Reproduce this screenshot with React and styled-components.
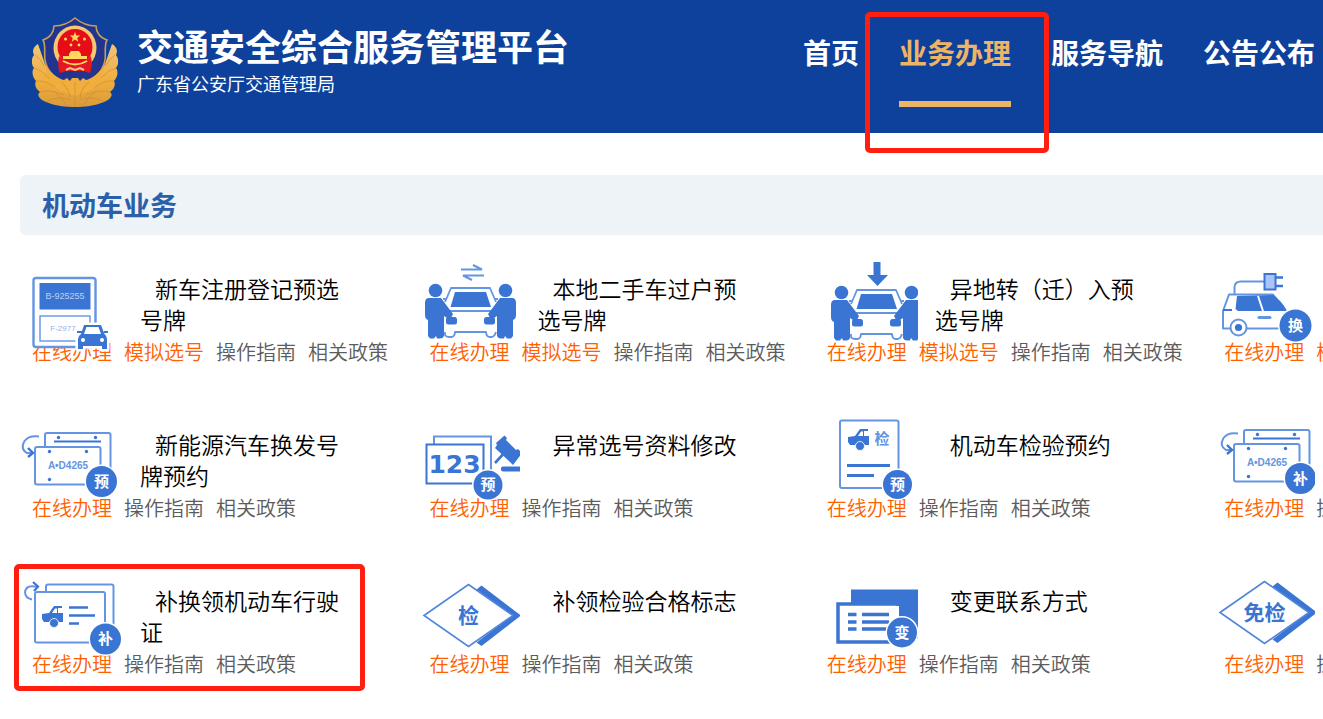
import React from 'react';
import styled, { createGlobalStyle } from 'styled-components';

const BLUE = '#3b75d4';
const LIGHT = '#6495e2';

const navItems = ['首页', '业务办理', '服务导航', '公告公布'];

const services = [
	{ icon: PlateCarIcon, title: '新车注册登记预选号牌', links: ['在线办理', '模拟选号', '操作指南', '相关政策'] },
	{ icon: TransferIcon, title: '本地二手车过户预选号牌', links: ['在线办理', '模拟选号', '操作指南', '相关政策'] },
	{ icon: MoveInIcon, title: '异地转（迁）入预选号牌', links: ['在线办理', '模拟选号', '操作指南', '相关政策'] },
	{ icon: ElectricCarIcon, links: ['在线办理', '模拟选号'] },
	{ icon: PlateBookIcon, title: '新能源汽车换发号牌预约', links: ['在线办理', '操作指南', '相关政策'] },
	{ icon: NumberEditIcon, title: '异常选号资料修改', links: ['在线办理', '操作指南', '相关政策'] },
	{ icon: InspectionIcon, title: '机动车检验预约', links: ['在线办理', '操作指南', '相关政策'] },
	{ icon: PlateReissueIcon, links: ['在线办理', '操作指南'] },
	{ icon: LicenseIcon, title: '补换领机动车行驶证', links: ['在线办理', '操作指南', '相关政策'], marked: true },
	{ icon: MarkIcon, title: '补领检验合格标志', links: ['在线办理', '操作指南', '相关政策'] },
	{ icon: ContactIcon, title: '变更联系方式', links: ['在线办理', '操作指南', '相关政策'] },
	{ icon: ExemptIcon, links: ['在线办理', '操作指南'] },
];

function App() {
	return (
		<Page>
			<GlobalStyle />
			<Header>
				<Emblem />
				<Brand>
					<BrandTitle>交通安全综合服务管理平台</BrandTitle>
					<BrandUnit>广东省公安厅交通管理局</BrandUnit>
				</Brand>
				<Nav>
					{navItems.map((item) => (
						<NavItem key={item}>
							<NavLink href="#" $active={item === '业务办理'}>
								{item}
							</NavLink>
							{item === '业务办理' && <NavMarker />}
						</NavItem>
					))}
				</Nav>
			</Header>
			<Main>
				<SectionTitle>机动车业务</SectionTitle>
				<ServiceGrid>
					{services.map((service, i) => (
						<ServiceCard key={i} {...service} />
					))}
				</ServiceGrid>
			</Main>
		</Page>
	);
}

export default App;

function ServiceCard({ icon: Icon, title, links, marked }) {
	return (
		<Card>
			<CardTop>
				<IconBox viewBox="0 0 103 92" aria-hidden="true">
					<Icon />
				</IconBox>
				{title && <CardTitle>{title}</CardTitle>}
			</CardTop>
			<Links>
				{links.map((link) => (
					<ServiceLink key={link} href="#" $hot={link === '在线办理' || link === '模拟选号'}>
						{link}
					</ServiceLink>
				))}
			</Links>
			{marked && <CardMarker />}
		</Card>
	);
}

function Emblem() {
	return (
		<EmblemSvg viewBox="0 0 86 92" aria-hidden="true">
			<defs>
				<linearGradient id="gold" x1="0" y1="0" x2="0" y2="1">
					<stop offset="0" stopColor="#f0c47a" />
					<stop offset="0.6" stopColor="#f0ae3c" />
					<stop offset="1" stopColor="#d99a3a" />
				</linearGradient>
			</defs>
			<path
				d="M6 28 C1 31 0 35 2 39 C-1 43 -1 48 2 52 C-1 56 1 62 4 65 C2 69 4 73 8 76 C4 79 8 84 14 86 C23 90 34 91 43 91 C52 91 63 90 72 86 C78 84 82 79 78 76 C82 73 84 69 82 65 C85 62 87 56 84 52 C87 48 87 43 84 39 C86 35 85 31 80 28 L73 48 L60 68 L26 68 L13 48 Z"
				fill="url(#gold)"
			/>
			<path
				d="M43 2 C36 8 28 10 22 10 C22 16 18 22 11 24 C14 29 12 37 13 44 C15 57 28 68 43 73 C58 68 71 57 73 44 C74 37 72 29 75 24 C68 22 64 16 64 10 C58 10 50 8 43 2 Z"
				fill="#23348c"
				stroke="#c99c58"
				strokeWidth="1.6"
			/>
			<path
				d="M14 50 C20 58 27 63 32 64 L35 62 L38 65 L40 62 H46 L48 65 L51 62 L54 64 C59 63 66 58 72 50 C72 60 67 68 59 74 L43 80 L27 74 C19 68 14 60 14 50 Z"
				fill="#f0ae3c"
			/>
			<g fill="none" stroke="#c98a30" strokeWidth="1" opacity="0.6">
				<path d="M3 39 Q9 43 12 50 M2 52 Q10 54 17 62 M4 65 Q13 64 23 71 M8 76 Q18 73 32 79 M14 86 Q25 79 39 84" />
				<path d="M83 39 Q77 43 74 50 M84 52 Q76 54 69 62 M82 65 Q73 64 63 71 M78 76 Q68 73 54 79 M72 86 Q61 79 47 84" />
				<path d="M29 66 Q37 72 38 82 M57 66 Q49 72 48 82 M43 66 V91 M22 75 Q31 83 35 89 M64 75 Q55 83 51 89" />
			</g>
			<ellipse cx="43" cy="32" rx="21.5" ry="22.5" fill="#f3ca73" />
			<ellipse cx="43" cy="31" rx="17.5" ry="18" fill="#e60c18" />
			<path d="M27 40 Q25 51 28 57 L35 55 H51 L58 57 Q61 51 59 40 L51 47 H35 Z" fill="#e31820" />
			<path
				d="M43 16 l1.4 3.6 h3.8 l-3 2.4 1.1 3.8 -3.3 -2.2 -3.3 2.2 1.1 -3.8 -3 -2.4 h3.8z"
				fill="#ffd85e"
			/>
			<g fill="#ffd85e">
				<circle cx="33.5" cy="23" r="1.5" />
				<circle cx="52.5" cy="23" r="1.5" />
				<circle cx="39" cy="29" r="1.4" />
				<circle cx="47" cy="29" r="1.4" />
				<path d="M37 38 L39 35 H47 L49 38 V40 H55 V43 H31 V40 H37 Z" />
			</g>
			<path d="M31 45 Q43 52 55 45" stroke="#ffd85e" strokeWidth="2" fill="none" />
			<path d="M34 54 l4 -2 5 2 5 -2 4 2" stroke="#f7c98a" strokeWidth="2" fill="none" />
		</EmblemSvg>
	);
}

function Badge({ x, y, r = 15.5, text }) {
	return (
		<g>
			<circle cx={x} cy={y} r={r + 1.5} fill="#fff" />
			<circle cx={x} cy={y} r={r} fill={BLUE} />
			<IconText x={x} y={y + 5} $size={15} $color="#fff">
				{text}
			</IconText>
		</g>
	);
}

function PlateCarIcon() {
	return (
		<g>
			<rect x="13.5" y="18" width="62" height="69" rx="2.5" fill="#fff" stroke={LIGHT} strokeWidth="2.4" />
			<rect x="19.5" y="23" width="51" height="26.5" fill={BLUE} />
			<PlateText x="45" y="39" $size={9} $color="#b9d0f5">
				B-925255
			</PlateText>
			<rect x="20" y="56" width="50" height="25" fill="#fff" stroke={LIGHT} strokeWidth="1.4" />
			<PlateText x="43" y="71" $size={8} $color="#92b3e8">
				F-2977
			</PlateText>
			<path
				d="M61 74 L64 65 H81 L84.5 74 Q87 76 87 79 V89 H82 V86 H63 V89 H58 V79 Q58 76 61 74 Z"
				fill={BLUE}
				stroke="#fff"
				strokeWidth="5"
				strokeLinejoin="round"
			/>
			<path
				d="M61 74 L64 65 H81 L84.5 74 Q87 76 87 79 V89 H82 V86 H63 V89 H58 V79 Q58 76 61 74 Z"
				fill={BLUE}
			/>
			<path d="M57 72 h5 M84 72 h4" stroke={BLUE} strokeWidth="2" />
			<path d="M64 74 L66.5 67 H78.5 L81 74 Z" fill="#fff" />
			<circle cx="63" cy="80" r="2" fill="#fff" />
			<circle cx="82" cy="80" r="2" fill="#fff" />
		</g>
	);
}

function Handover() {
	return (
		<g>
			<g fill="none" stroke={LIGHT} strokeWidth="1.8" strokeLinejoin="round">
				<path d="M28 42 L34 28 H73 L79 42" />
				<path d="M31 51 H76 M30 39 H26 M77 39 H81" />
				<path d="M28 72 V75 Q29 77 32 77 H35 Q38 76 38 72 H69 Q69 76 72 77 H75 Q78 76 79 72" />
			</g>
			<path d="M38 32 H69 L74 47 H33.5 Z" fill={BLUE} />
			<rect x="29" y="57" width="11" height="7.5" rx="2.5" fill={BLUE} />
			<rect x="67" y="57" width="11" height="7.5" rx="2.5" fill={BLUE} />
			<g fill={BLUE}>
				<circle cx="18.5" cy="30.5" r="6.8" />
				<path d="M12 38 H24 L36 54 L33 60 L27 56 V76 Q26 78.5 23 78.5 H20 L19 76 L17 78.5 H13 L11 76 V60 Q8 59 8 55 V43 Q8 38 12 38 Z" />
				<circle cx="88.5" cy="30.5" r="6.8" />
				<path d="M95 38 H83 L71 54 L74 60 L80 56 V76 Q81 78.5 84 78.5 H87 L88 76 L90 78.5 H94 L96 76 V60 Q99 59 99 55 V43 Q99 38 95 38 Z" />
			</g>
		</g>
	);
}

function TransferIcon() {
	return (
		<g>
			<path d="M44 9.5 H65 L56 5 M67 15.5 H46 L55 20" fill="none" stroke={LIGHT} strokeWidth="2" />
			<Handover />
		</g>
	);
}

function MoveInIcon() {
	return (
		<g>
			<path d="M58.5 2 H65.5 V15 H73 L62.5 26 L52 15 H58.5 Z" fill={BLUE} />
			<g transform="translate(8 2)">
				<Handover />
			</g>
		</g>
	);
}

function ElectricCarIcon() {
	return (
		<g>
			<path
				d="M22.5 34 V27 Q23 21.5 29 21.5 H52 M22 68.5 H11 V51 L17 34.5 H61 L74 51 M35 68.5 H68"
				fill="none"
				stroke={LIGHT}
				strokeWidth="2"
				strokeLinejoin="round"
			/>
			<path d="M11 50 H20" stroke={BLUE} strokeWidth="2" />
			<path d="M25 36 L61 35 Q70 41 75 51 H26 L23.5 49 Z" fill={BLUE} />
			<path d="M46 36 L51 51" stroke="#fff" strokeWidth="2" />
			<path d="M47 57.5 H58" stroke={LIGHT} strokeWidth="3" strokeLinecap="round" />
			<rect x="52.5" y="14" width="11" height="15.5" fill="#a9c5f3" stroke={BLUE} strokeWidth="2" />
			<path d="M64 17.5 H71 M64 26 H71" stroke={BLUE} strokeWidth="2.6" />
			<circle cx="26.5" cy="67.5" r="8" fill="#fff" stroke={LIGHT} strokeWidth="2" />
			<circle cx="26.5" cy="67.5" r="3.6" fill={BLUE} />
			<Badge x={83.5} y={65.5} r={16} text="换" />
		</g>
	);
}

function Plates({ text }) {
	return (
		<g>
			<g fill="#fff" stroke={LIGHT} strokeWidth="2">
				<rect x="25" y="17" width="65.5" height="51" rx="2" />
				<rect x="15" y="31" width="65.5" height="37.5" rx="2" />
			</g>
			<g fill={BLUE}>
				<circle cx="38.5" cy="21.5" r="1.7" />
				<circle cx="75.5" cy="21.5" r="1.7" />
				<rect x="34" y="24.5" width="47" height="2" />
				<circle cx="29.5" cy="35.5" r="1.7" />
				<circle cx="66.5" cy="35.5" r="1.7" />
				<circle cx="29.5" cy="63.5" r="1.7" />
			</g>
			<PlateText x="48" y="53" $size={10} $color={LIGHT} $bold>
				A•D4265
			</PlateText>
			<path d="M19 20.5 Q9 19 4.5 25 Q0 33 7 37 H12" fill="none" stroke={LIGHT} strokeWidth="2" />
			<path d="M8 32 L13 37 L8 41" fill="none" stroke={BLUE} strokeWidth="2.4" />
			<Badge x={81.5} y={65.5} text={text} />
		</g>
	);
}

function PlateBookIcon() {
	return <Plates text="预" />;
}

function PlateReissueIcon() {
	return (
		<g transform="translate(7 -3)">
			<Plates text="补" />
		</g>
	);
}

function NumberEditIcon() {
	return (
		<g>
			<g fill="#fff" stroke={BLUE} strokeWidth="2">
				<rect x="17" y="20.5" width="57" height="36" stroke={LIGHT} />
				<rect x="9.5" y="28.5" width="57" height="39" />
			</g>
			<IconText x="37.5" y="57" $size={25} $color={BLUE} $digits>
				123
			</IconText>
			<path d="M78 32 L80 29 L79 27 L87.5 19.5 L90 22 L89 24 L99 34 L101 33 L105 37 L96 49 L93 46 Z" fill={BLUE} />
			<path d="M89 35 L78 47" stroke={BLUE} strokeWidth="2.6" />
			<rect x="84" y="50.5" width="22" height="5" rx="2" fill={BLUE} />
			<Badge x={71} y={69} r={14.5} text="预" />
		</g>
	);
}

function Truck({ x, y }) {
	return (
		<g transform={`translate(${x} ${y})`}>
			<path d="M0 8 L7 7 L12 0 H20 V2 H16 V7 H21 V16 H17 Q12 9 7 16 H2 L0 13 Z" fill={BLUE} />
			<path d="M10 7 L13 2.5 H15 V7 Z" fill="#fff" />
			<circle cx="12" cy="17" r="4.5" fill={BLUE} stroke="#fff" strokeWidth="0.8" />
		</g>
	);
}

function InspectionIcon() {
	return (
		<g>
			<rect x="25" y="4.5" width="58.5" height="67.5" rx="2" fill="#fff" stroke={LIGHT} strokeWidth="2" />
			<Truck x={33} y={13} />
			<IconText x="67" y="28" $size={15} $color={LIGHT}>
				检
			</IconText>
			<path d="M32 49.5 H75 M32 59.5 H59" stroke={BLUE} strokeWidth="3" />
			<Badge x={82.5} y={68.5} r={14.5} text="预" />
		</g>
	);
}

function LicenseIcon() {
	return (
		<g>
			<g fill="#fff" stroke={LIGHT} strokeWidth="2">
				<rect x="26" y="12.5" width="67.5" height="54" rx="2" />
				<rect x="15" y="20" width="70" height="50.5" rx="2" />
			</g>
			<Truck x={22} y={34} />
			<path d="M49 35.5 H68 M49 43.5 H75 M49 51.5 H59" stroke={BLUE} strokeWidth="2.6" />
			<path d="M12 27.5 Q5 26 5 20 Q6 13.5 14 14.5 H18" fill="none" stroke={LIGHT} strokeWidth="2" />
			<path d="M13 10 L18 14.5 L14 19" fill="none" stroke={BLUE} strokeWidth="2.2" />
			<Badge x={85.5} y={67} text="补" />
		</g>
	);
}

function Diamond({ text }) {
	return (
		<g>
			<path d="M59.5 17.5 L64.5 13.5 L104 43.5 L64.5 74 L59.5 70.5 L95 43.5 Z" fill={BLUE} />
			<path d="M7 43.5 L51.5 12.5 L96 43.5 L51.5 74.5 Z" fill="#fff" stroke="#5085da" strokeWidth="1.6" />
			<IconText x="51.5" y="51" $size={21} $color={BLUE}>
				{text}
			</IconText>
		</g>
	);
}

function MarkIcon() {
	return <Diamond text="检" />;
}

function ExemptIcon() {
	return (
		<g transform="translate(1 -3)">
			<Diamond text="免检" />
		</g>
	);
}

function ContactIcon() {
	return (
		<g>
			<rect x="36" y="17.5" width="67" height="49" fill={BLUE} />
			<rect x="23" y="32" width="60" height="38" fill="#fff" stroke={BLUE} strokeWidth="3.5" />
			<rect x="76" y="34" width="8" height="38" fill="#fff" />
			<path
				d="M33 42.5 H41.5 M33 50 H41.5 M33 57 H41.5 M47 42.5 H74 M47 50 H74 M47 57 H74"
				stroke={BLUE}
				strokeWidth="3.5"
			/>
			<Badge x={87} y={60.5} r={15} text="变" />
		</g>
	);
}

const GlobalStyle = createGlobalStyle`
	* {
		box-sizing: border-box;
	}
	body {
		margin: 0;
		background-color: #fff;
		font-family: 'Noto Sans CJK SC', sans-serif;
	}
	a {
		text-decoration: none;
	}
`;

const Page = styled.div`
	overflow: hidden;
`;

const Header = styled.header`
	display: flex;
	align-items: flex-start;
	height: 133px;
	padding: 16px 8px 0 32px;
	background-color: #0e419c;
	color: #fff;
`;

const EmblemSvg = styled.svg`
	flex: none;
	width: 86px;
	height: 92px;
`;

const Brand = styled.div`
	padding: 6px 0 0 19px;
	white-space: nowrap;
`;

const BrandTitle = styled.h1`
	margin: 0;
	font-size: 36px;
	line-height: 46px;
	font-weight: 700;
`;

const BrandUnit = styled.p`
	margin: 0;
	font-size: 18px;
	line-height: 30px;
`;

const Nav = styled.nav`
	display: flex;
	gap: 40px;
	margin-left: auto;
	padding-top: 16px;
`;

const NavItem = styled.div`
	position: relative;
`;

const NavLink = styled.a`
	display: block;
	padding-bottom: 29px;
	border-bottom: 6px solid ${(props) => (props.$active ? '#edb466' : 'transparent')};
	color: ${(props) => (props.$active ? '#edb466' : '#fff')};
	font-size: 28px;
	line-height: 40px;
	font-weight: 700;
	white-space: nowrap;
`;

const Marker = styled.div`
	position: absolute;
	border: 5px solid #ff1e10;
	border-radius: 5px;
	pointer-events: none;
`;

const NavMarker = styled(Marker)`
	inset: -20px -38px -46px -34px;
`;

const CardMarker = styled(Marker)`
	top: -8px;
	left: -6px;
	width: 351px;
	height: 127px;
`;

const Main = styled.main`
	padding: 42px 0 40px 20px;
`;

const SectionTitle = styled.h2`
	margin: 0 0 25px;
	padding-left: 22px;
	border-radius: 6px 0 0 6px;
	background-color: #eef3f8;
	color: #2b60a8;
	font-size: 27px;
	line-height: 60px;
	font-weight: 700;
`;

const ServiceGrid = styled.div`
	display: grid;
	grid-template-columns: repeat(4, 30.5%);
	row-gap: 49px;
`;

const Card = styled.article`
	position: relative;
`;

const CardTop = styled.div`
	display: flex;
	height: 77px;
`;

/* taller than its row, so the drawing may lap over the links */
const IconBox = styled.svg`
	position: relative;
	z-index: 1;
	flex: none;
	width: 103px;
	height: 92px;
	pointer-events: none;
`;

const CardTitle = styled.h3`
	width: 222px;
	margin: 0;
	padding: 13px 0 0 17px;
	color: #000;
	font-size: 23px;
	line-height: 31px;
	font-weight: 350;
	text-indent: 15px;
`;

const Links = styled.div`
	display: flex;
	gap: 12px;
	padding-left: 12px;
`;

const ServiceLink = styled.a`
	color: ${(props) => (props.$hot ? '#ff6000' : '#5c5c5c')};
	font-size: 20px;
	line-height: 30px;
	font-weight: 350;
	white-space: nowrap;
`;

const IconText = styled.text`
	fill: ${(props) => props.$color};
	font-family: ${(props) => (props.$digits ? "'DejaVu Sans'" : "'Noto Sans CJK SC'")}, sans-serif;
	font-size: ${(props) => props.$size}px;
	font-weight: 700;
	text-anchor: middle;
`;

const PlateText = styled.text`
	fill: ${(props) => props.$color};
	font-family: 'Liberation Sans', sans-serif;
	font-size: ${(props) => props.$size}px;
	font-weight: ${(props) => (props.$bold ? 700 : 400)};
	text-anchor: middle;
`;
